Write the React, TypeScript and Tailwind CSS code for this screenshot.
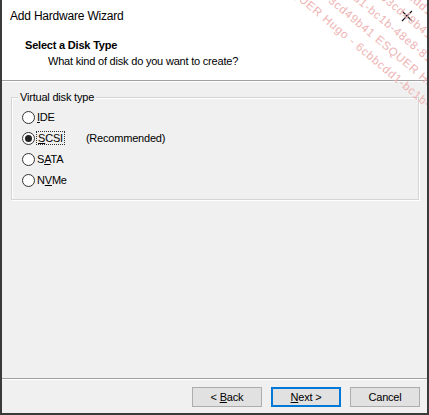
import React from "react";

function Radio({ checked, label }: { checked?: boolean; label: React.ReactNode }) {
  return (
    <div className="flex items-center h-[21px]">
      <span className="w-[13px] h-[13px] rounded-full border border-[#333] bg-white flex items-center justify-center">
        {checked && <span className="w-[7px] h-[7px] rounded-full bg-[#222]" />}
      </span>
      <span className="ml-[2px]">{label}</span>
    </div>
  );
}

const WM = "ESQUER Hugo - 6cbbcdd1-bc1b-48e8-816a-7a383cd49b41 ";

export default function App() {
  const wm = WM + WM + WM;
  const shifts = ["-ml-[150px]", "-ml-[40px]", "-ml-[215px]", "-ml-[95px]", "-ml-[260px]", "-ml-[20px]"];
  return (
    <div
      className="w-[429px] h-[415px] relative overflow-hidden bg-[#f0f0f0] border-l-2 border-r-2 border-b-2 border-[#3a3a3a] text-[11px] tracking-[-0.2px] text-black flex flex-col"
      style={{ fontFamily: '"Liberation Sans", Arial, sans-serif' }}
    >
      {/* Title + header (white) */}
      <div className="bg-white h-[81px] flex flex-col border-b border-[#a0a0a0]">
        <div className="h-[32px] flex items-center justify-between pl-[8px] pr-[14px]">
          <span className="text-[12px]">Add Hardware Wizard</span>
          <svg width="12" height="12" viewBox="0 0 12 12">
            <path d="M1 1 L11 11 M11 1 L1 11" stroke="#111" strokeWidth="1.1" />
          </svg>
        </div>
        <div className="pl-[23px] mt-[5px] font-bold leading-[16px]">Select a Disk Type</div>
        <div className="pl-[46px] leading-[16px] mt-[0px]">What kind of disk do you want to create?</div>
      </div>
      <div className="h-px bg-white" />

      {/* Body */}
      <div className="flex-1 pl-[9px] pr-[8px] pt-[15px] flex flex-col">
        <div className="relative border border-[#d5d5d5] shadow-[inset_1px_1px_0_#ffffff,1px_1px_0_#ffffff] h-[103px] pt-[9px] pl-[10px]">
          <span className="absolute -top-[9px] left-[6px] px-[2px] bg-[#f0f0f0] leading-[16px]">Virtual disk type</span>
          <Radio label={<span><u>I</u>DE</span>} />
          <div className="flex items-center">
            <Radio checked label={<span className="outline outline-1 outline-dotted outline-[#333] px-[1px]"><u>S</u>CSI</span>} />
            <span className="ml-[22px]">(Recommended)</span>
          </div>
          <Radio label={<span>S<u>A</u>TA</span>} />
          <Radio label={<span>N<u>V</u>Me</span>} />
        </div>
      </div>

      {/* Footer */}
      <div className="border-t border-[#a0a0a0] shadow-[inset_0_1px_0_#ffffff] h-[35px] flex items-start justify-end pr-[7px] pt-[8px] gap-[9px]">
        <button className="w-[70px] h-[20px] border border-[#adadad] bg-[#e1e1e1] leading-[18px]">&lt; <u>B</u>ack</button>
        <button className="w-[70px] h-[20px] border-2 border-[#0078d7] bg-[#e1e1e1] leading-[16px]"><u>N</u>ext &gt;</button>
        <button className="w-[70px] h-[20px] border border-[#adadad] bg-[#e1e1e1] leading-[18px]">Cancel</button>
      </div>

      {/* Watermark overlay */}
      <div className="absolute left-[288px] top-[-108px] h-[108px] w-[300px] pointer-events-none origin-bottom-left rotate-[40deg] flex flex-col justify-end text-[11.5px] leading-[18px] tracking-[0.8px] text-[#eeb4b4] whitespace-nowrap">
        {shifts.map((s, i) => (
          <div key={i} className={s}>{wm}</div>
        ))}
      </div>
    </div>
  );
}
